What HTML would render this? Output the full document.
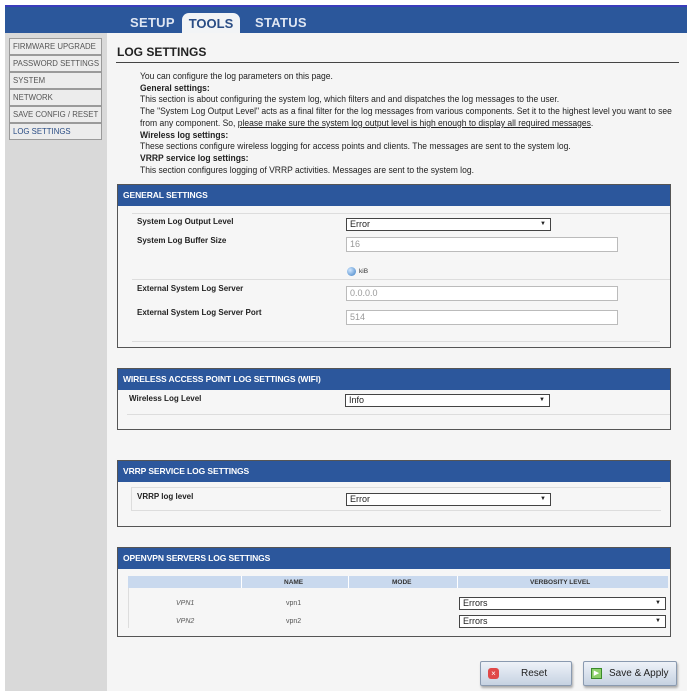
<!DOCTYPE html>
<html><head><meta charset="utf-8"><style>
*{box-sizing:border-box;margin:0;padding:0}
body{width:689px;height:691px;background:#fff;font-family:"Liberation Sans",Arial,sans-serif;position:relative;overflow:hidden;color:#222}
.abs{position:absolute}
#top{left:5px;top:5px;width:682px;height:28px;background:#2b579b;border-top:2px solid #3a3dbb}
.tab{position:absolute;top:15px;font-weight:bold;font-size:13px;color:#dfe6f2;letter-spacing:0.3px}
#tools{left:182px;top:13px;width:58px;height:20px;background:#f2f4f6;border-radius:7px 7px 0 0;color:#2a4d85;font-size:13px;font-weight:bold;text-align:center;line-height:21px}
#side{left:5px;top:33px;width:102px;height:658px;background:#d9d9d9}
#content{left:107px;top:33px;width:580px;height:658px;background:#f5f5f5}
.nav{position:absolute;left:9px;width:93px;height:17px;border:1px solid #9a9a9a;background:#ececec;font-size:7.8px;color:#555;line-height:15px;padding-left:3px;white-space:nowrap}
.txt{font-size:9.6px;white-space:nowrap;transform:scaleX(.89);transform-origin:0 0;line-height:11.7px}
.panel{position:absolute;left:117px;width:554px;border:1px solid #555;background:#f6f6f6}
.ph{height:21px;background:#2c579c;color:#fff;font-weight:bold;font-size:8.5px;line-height:21px;padding-left:5px;letter-spacing:-.1px}
.lbl{position:absolute;font-size:8px;font-weight:bold;color:#222}
.sel{position:absolute;height:13px;border:1px solid #444;background:#fff;font-size:9px;line-height:11px;padding-left:3px;color:#222}
.sel:after{content:"▼";position:absolute;right:4px;top:0;font-size:6px}
.inp{position:absolute;height:15px;border:1px solid #bbb;background:#fff;font-size:9px;color:#999;line-height:13px;padding-left:3px}
.hl{position:absolute;height:1px;background:#ddd}
.btn{position:absolute;top:661px;height:25px;border:1px solid #8a9ab0;border-radius:2px;background:linear-gradient(#eef2f8,#c6d2e2);box-shadow:1px 2px 2px #aaa;font-size:10px;line-height:23px}
</style></head><body>
<div id="top" class="abs"></div>
<div class="tab" style="left:130px">SETUP</div>
<div id="tools" class="abs">TOOLS</div>
<div class="tab" style="left:255px">STATUS</div>
<div id="side" class="abs"></div>
<div id="content" class="abs"></div>
<div class="nav" style="top:38px">FIRMWARE UPGRADE</div>
<div class="nav" style="top:55px">PASSWORD SETTINGS</div>
<div class="nav" style="top:72px">SYSTEM</div>
<div class="nav" style="top:89px">NETWORK</div>
<div class="nav" style="top:106px">SAVE CONFIG / RESET</div>
<div class="nav" style="top:123px;color:#2a4d85">LOG SETTINGS</div>

<div class="abs" style="left:117px;top:45px;font-size:12px;font-weight:bold;color:#222">LOG SETTINGS</div>
<div class="abs" style="left:116px;top:62px;width:563px;height:1px;background:#444"></div>
<div class="abs" style="left:140px;top:71px">
<div class="txt">You can configure the log parameters on this page.</div>
<div class="txt"><b>General settings:</b></div>
<div class="txt">This section is about configuring the system log, which filters and and dispatches the log messages to the user.</div>
<div class="txt">The "System Log Output Level" acts as a final filter for the log messages from various components. Set it to the highest level you want to see</div>
<div class="txt">from any component. So, <u>please make sure the system log output level is high enough to display all required messages</u>.</div>
<div class="txt"><b>Wireless log settings:</b></div>
<div class="txt">These sections configure wireless logging for access points and clients. The messages are sent to the system log.</div>
<div class="txt"><b>VRRP service log settings:</b></div>
<div class="txt">This section configures logging of VRRP activities. Messages are sent to the system log.</div>
</div>

<div class="panel" style="top:184px;height:164px"><div class="ph">GENERAL SETTINGS</div></div>
<div class="hl" style="left:132px;top:213px;width:538px"></div>
<div class="lbl" style="left:137px;top:217px">System Log Output Level</div>
<div class="sel" style="left:346px;top:218px;width:205px">Error</div>
<div class="lbl" style="left:137px;top:236px">System Log Buffer Size</div>
<div class="inp" style="left:346px;top:237px;width:272px">16</div>
<div class="abs" style="left:347px;top:267px;width:9px;height:9px;border-radius:50%;background:radial-gradient(circle at 35% 35%,#cfe6ff,#3d7fc4)"></div>
<div class="abs" style="left:359px;top:268px;font-size:6.5px;color:#333">kiB</div>
<div class="hl" style="left:132px;top:279px;width:538px"></div>
<div class="lbl" style="left:137px;top:284px">External System Log Server</div>
<div class="inp" style="left:346px;top:286px;width:272px">0.0.0.0</div>
<div class="lbl" style="left:137px;top:308px">External System Log Server Port</div>
<div class="inp" style="left:346px;top:310px;width:272px">514</div>
<div class="hl" style="left:132px;top:341px;width:528px"></div>

<div class="panel" style="top:368px;height:62px"><div class="ph">WIRELESS ACCESS POINT LOG SETTINGS (WIFI)</div></div>
<div class="hl" style="left:127px;top:414px;width:543px"></div>
<div class="lbl" style="left:129px;top:394px">Wireless Log Level</div>
<div class="sel" style="left:345px;top:394px;width:205px">Info</div>

<div class="panel" style="top:460px;height:67px"><div class="ph">VRRP SERVICE LOG SETTINGS</div></div>
<div class="abs" style="left:131px;top:487px;width:530px;height:24px;border:1px solid #ddd;border-right:none"></div>
<div class="lbl" style="left:137px;top:492px">VRRP log level</div>
<div class="sel" style="left:346px;top:493px;width:205px">Error</div>

<div class="panel" style="top:547px;height:90px"><div class="ph">OPENVPN SERVERS LOG SETTINGS</div></div>
<div class="abs" style="left:128px;top:576px;width:540px;height:12px;background:#c9d9ee"></div>
<div class="abs" style="left:241px;top:576px;width:1px;height:12px;background:#fff"></div>
<div class="abs" style="left:348px;top:576px;width:1px;height:12px;background:#fff"></div>
<div class="abs" style="left:457px;top:576px;width:1px;height:12px;background:#fff"></div>
<div class="abs" style="left:128px;top:588px;width:1px;height:40px;background:#ddd"></div>
<div class="abs" style="left:284px;top:579px;font-size:6.5px;font-weight:bold;color:#333">NAME</div>
<div class="abs" style="left:392px;top:579px;font-size:6.5px;font-weight:bold;color:#333">MODE</div>
<div class="abs" style="left:530px;top:579px;font-size:6.5px;font-weight:bold;color:#333">VERBOSITY LEVEL</div>
<div class="abs" style="left:176px;top:600px;font-size:7px;font-style:italic;color:#555">VPN1</div>
<div class="abs" style="left:176px;top:618px;font-size:7px;font-style:italic;color:#555">VPN2</div>
<div class="abs" style="left:286px;top:600px;font-size:7px;color:#555">vpn1</div>
<div class="abs" style="left:286px;top:618px;font-size:7px;color:#555">vpn2</div>
<div class="sel" style="left:459px;top:597px;width:207px">Errors</div>
<div class="sel" style="left:459px;top:615px;width:207px">Errors</div>

<div class="btn" style="left:480px;width:92px"><span style="position:absolute;left:7px;top:6px;width:11px;height:11px;border-radius:3px;background:#e04848;color:#fff;font-size:8px;line-height:11px;text-align:center">×</span><span style="position:absolute;left:40px">Reset</span></div>
<div class="btn" style="left:583px;width:94px"><span style="position:absolute;left:7px;top:6px;width:11px;height:11px;border:1px solid #3a8a2a;background:#8cd06a;color:#fff;font-size:7px;line-height:9px;text-align:center">▶</span><span style="position:absolute;left:25px">Save &amp; Apply</span></div>
</body></html>
